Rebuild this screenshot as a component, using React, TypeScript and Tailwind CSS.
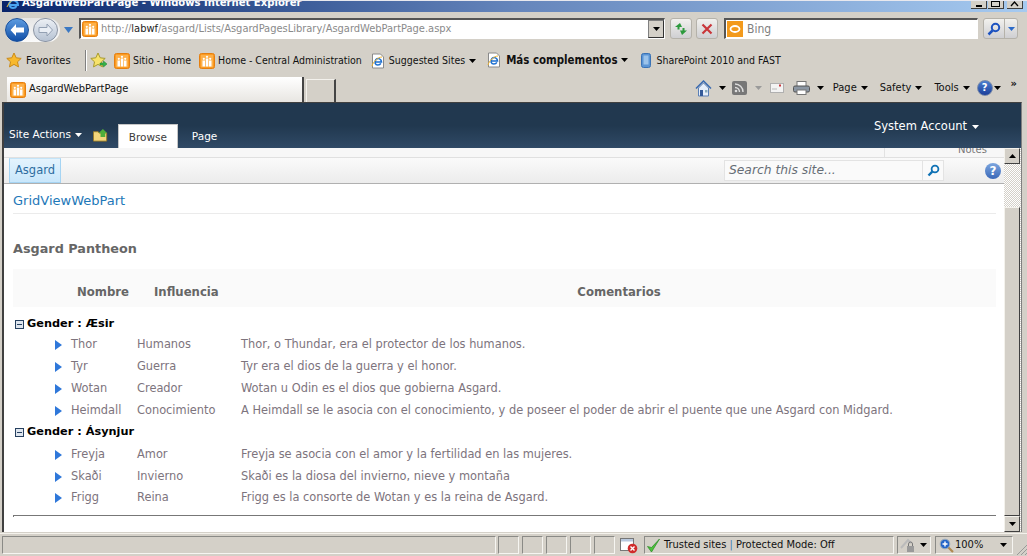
const ui = "font-['Tahoma','DejaVu_Sans_Condensed','Noto_Sans',sans-serif]";

function SpIcon({ size = 16 }: { size?: number }) {
  return (
    <svg width={size} height={size} viewBox="0 0 16 16" className="shrink-0">
      <rect x="0.5" y="0.5" width="15" height="15" rx="2" fill="#fb9a20" stroke="#e57f10" />
      <rect x="2" y="2" width="12" height="12" fill="#fdb04a" />
      <path d="M3.500 7.500h2.500v6H3.500zM6.800 5.500h2.500v8H6.800zM10 7.500h2.500v6H10z" fill="#fff" />
      <circle cx="4.800" cy="5.800" r="1.100" fill="#fff" />
      <circle cx="8" cy="3.800" r="1.100" fill="#fff" />
      <circle cx="11.200" cy="5.800" r="1.100" fill="#fff" />
    </svg>
  );
}

function IeIcon() {
  return (
    <svg width="16" height="16" viewBox="0 0 16 16" className="shrink-0">
      <path d="M2.500 1h8l3 3v11h-11z" fill="#fff" stroke="#8a8a8a" />
      <path d="M5 9h6.500c0-3-3.500-4.500-5.500-2.500-2 2.500-.8 5.500 1.800 5.500 1.500 0 2.500-.7 3-1.700" fill="none" stroke="#1c6fd0" strokeWidth="1.600" />
      <path d="M2 13c1-4 6-9 10-9" fill="none" stroke="#f3b52c" strokeWidth="1" />
    </svg>
  );
}

function Caret({ color = "#000", className = "" }: { color?: string; className?: string }) {
  return (
    <svg width="7" height="4" viewBox="0 0 7 4" className={`shrink-0 ${className}`}>
      <path d="M0 0h7L3.500 4z" fill={color} />
    </svg>
  );
}

function Star({ arrow = false }: { arrow?: boolean }) {
  return (
    <svg width="18" height="17" viewBox="0 0 18 17" className="shrink-0">
      <path d="M8 1l2.200 4.800 5 .6-3.700 3.400 1 5.100L8 12.400 3.500 14.900l1-5.100L.8 6.400l5-.6z" fill={arrow ? "#f7e26b" : "#f8b92e"} stroke={arrow ? "#a89a2c" : "#c98a1a"} />
      {arrow && <path d="M10 11h3.500V9l3.500 3-3.500 3v-2H10z" fill="#35b44a" stroke="#1c7c2d" strokeWidth=".5" />}
    </svg>
  );
}

function SmallBtn({ children, className = "" }: { children: React.ReactNode; className?: string }) {
  return (
    <div className={`h-[21px] flex items-center justify-center border border-[#b5b2aa] rounded-[3px] bg-gradient-to-b from-[#f2f1ee] to-[#cfcfd2] ${className}`}>
      {children}
    </div>
  );
}

function BookmarkLink({ icon, label, caret, className = "", bold = false }: { icon: React.ReactNode; label: string; caret?: boolean; className?: string; bold?: boolean }) {
  return (
    <div className={`flex items-center ${className}`}>
      {icon}
      <span className={`whitespace-nowrap ${bold ? "ml-[4px] font-bold text-[11.400px]" : "ml-[3px]"}`}>{label}</span>
      {caret && <Caret className={bold ? "ml-[3px]" : "ml-[4px]"} />}
    </div>
  );
}

function TitleBar() {
  return (
    <div className={`h-[12px] shrink-0 border-t border-[#e8e8ee] bg-gradient-to-r from-[#0a246a] from-[0%] via-[#6585bb] via-[50%] to-[#a6caf0] flex items-start overflow-hidden ml-[2px] ${ui}`}>
      <svg width="16" height="16" viewBox="0 0 16 16" className="ml-[4px] -mt-[5px] shrink-0">
        <path d="M3 9h9c0-4-5-6-7.500-3.500C2 8 3.500 12 7 12c1.500 0 3-.8 3.500-2" fill="none" stroke="#4aa3ee" strokeWidth="2" />
        <path d="M1 11C3 6 8 2 12 2" fill="none" stroke="#f3c030" strokeWidth="1" />
      </svg>
      <span className="-mt-[4px] text-[11.200px] leading-[12px] font-bold text-white whitespace-nowrap">AsgardWebPartPage - Windows Internet Explorer</span>
      <div className="ml-auto mr-[4px] flex gap-[1px] items-start">
        <div className="w-[16px] h-[8px] bg-[#d4d0c8] border-b border-r border-[#404040] flex justify-center"><div className="w-[6px] h-[2px] bg-black mt-[4px]" /></div>
        <div className="w-[16px] h-[8px] bg-[#d4d0c8] border-b border-r border-[#404040] flex justify-center"><div className="w-[9px] h-[6px] border border-black" /></div>
        <div className="w-[16px] h-[8px] bg-[#d4d0c8] ml-[2px] border-b border-r border-[#404040] flex justify-center">
          <svg width="9" height="6" viewBox="0 0 9 6"><path d="M1 5l3.500-4L8 5" fill="none" stroke="#000" strokeWidth="1.300" /></svg>
        </div>
      </div>
    </div>
  );
}

function AddressRow() {
  return (
    <div className={`h-[36px] shrink-0 flex items-start pt-[6px] text-[11px] ${ui}`}>
      <div className="ml-[5px] flex items-center h-[24px] w-[55px] rounded-full bg-gradient-to-b from-[#e6e6e6] to-[#fafafa]">
        <div className="w-[24px] h-[24px] rounded-full border border-[#1c4f96] bg-gradient-to-b from-[#5c9be0] to-[#0e4fa8] flex items-center justify-center">
          <svg width="16" height="14" viewBox="0 0 16 14"><path d="M7 1L1.500 7 7 13V9.500h8v-5H7z" fill="#fff" /></svg>
        </div>
        <div className="ml-[4px] w-[25px] h-[24px] rounded-full border border-[#8b94a3] bg-gradient-to-b from-[#ecf0f5] to-[#b6c2d3] flex items-center justify-center">
          <svg width="16" height="14" viewBox="0 0 16 14"><path d="M9 1l5.500 6L9 13V9.500H1v-5h8z" fill="#e9eef5" stroke="#93a0b3" /></svg>
        </div>
      </div>
      <svg width="9" height="6" viewBox="0 0 9 6" className="ml-[4px] mt-[9px] shrink-0"><path d="M0 0h9L4.500 6z" fill="#3b78c2" /></svg>
      <div className="ml-[6px] w-[586px] h-[21px] bg-white border-t-2 border-l-2 border-[#555] border-b border-r border-b-white border-r-white flex items-center">
        <div className="ml-[1px]"><SpIcon /></div>
        <span className="ml-[3px] text-[#8a8a8a] whitespace-nowrap">http://<span className="text-[#222]">labwf</span>/asgard/Lists/AsgardPagesLibrary/AsgardWebPartPage.aspx</span>
        <div className="ml-auto w-[16px] h-[18px] bg-[#d4d0c8] border border-[#808080] border-b-[#333] border-r-[#333] flex items-center justify-center">
          <Caret />
        </div>
      </div>
      <SmallBtn className="ml-[5px] w-[22px]">
        <svg width="14" height="14" viewBox="0 0 14 14"><path d="M6 1L1 5h2.500v2.500h2V5H8zM8 13l5-4.500h-2.500V6h-2v2.500H6z" fill="#2c9a3d" /></svg>
      </SmallBtn>
      <SmallBtn className="ml-[4px] w-[22px]">
        <svg width="12" height="12" viewBox="0 0 12 12"><path d="M1.500 1.500l9 9M10.500 1.500l-9 9" stroke="#c9363a" strokeWidth="2.200" /></svg>
      </SmallBtn>
      <div className="ml-[6px] w-[254px] h-[21px] bg-white border-t-2 border-l-2 border-[#555] border-b border-r border-b-white border-r-white flex items-center text-[12px]">
        <div className="w-[16px] h-[16px] bg-[#f39a1c] flex items-center justify-center ml-[1px]">
          <svg width="12" height="10" viewBox="0 0 12 10"><ellipse cx="6" cy="5" rx="4.500" ry="3" fill="none" stroke="#fff" strokeWidth="1.800" /></svg>
        </div>
        <span className="ml-[4px] text-[#808080]">Bing</span>
      </div>
      <SmallBtn className="ml-[5px] w-[35px] !justify-start">
        <div className="w-[21px] flex justify-center border-r border-[#b5b2aa] h-full items-center">
          <svg width="14" height="14" viewBox="0 0 14 14"><circle cx="8.500" cy="5.500" r="3.700" fill="none" stroke="#1c52c0" strokeWidth="2" /><path d="M5.500 8.500L1.500 12.500" stroke="#1c52c0" strokeWidth="2.500" /></svg>
        </div>
        <div className="flex-1 flex justify-center"><Caret color="#2c6ac8" /></div>
      </SmallBtn>
    </div>
  );
}

function FavoritesRow() {
  return (
    <div className={`h-[28px] shrink-0 flex items-center text-[10.500px] text-[#111] pb-[3px] ${ui}`}>
      <div className="ml-[6px] flex items-center"><Star /><span className="ml-[2px] pt-[1px] w-[46px] whitespace-nowrap text-[11px]">Favorites</span></div>
      <div className="ml-[13px] w-[2px] h-[21px] border-l border-r border-l-[#808080] border-r-white" />
      <div className="ml-[3px]"><Star arrow /></div>
      <BookmarkLink className="ml-[6px]" icon={<SpIcon />} label="Sitio - Home" />
      <BookmarkLink className="ml-[8px]" icon={<SpIcon />} label="Home - Central Administration" />
      <BookmarkLink className="ml-[8px]" icon={<IeIcon />} label="Suggested Sites" caret />
      <BookmarkLink className="ml-[10px]" icon={<IeIcon />} label="Más complementos" caret bold />
      <div className="ml-[13px] flex items-center">
        <svg width="10" height="15" viewBox="0 0 10 15"><rect x=".5" y=".5" width="9" height="14" rx="2" fill="#5b94d4" stroke="#3a72b5" /><rect x="2.500" y="2.500" width="5" height="9" fill="#9cc3ea" /></svg>
        <span className="ml-[6px] whitespace-nowrap">SharePoint 2010 and FAST</span>
      </div>
    </div>
  );
}

function TabRow() {
  return (
    <div className={`h-[26px] shrink-0 flex items-start text-[11px] text-[#111] ${ui}`}>
      <div className="ml-[7px] mt-[1px] w-[297px] h-[25px] flex items-center bg-gradient-to-b from-white to-[#e8e6e2] border-r-2 border-[#444]">
        <div className="ml-[3px]"><SpIcon /></div>
        <span className="ml-[3px]">AsgardWebPartPage</span>
      </div>
      <div className="ml-[2px] mt-[3px] w-[30px] h-[23px] border-t border-l border-[#f3f1ec] border-r-2 border-r-[#444]" />
      <div className="ml-auto flex items-center mr-[10px] h-[22px] mt-[1px]">
        <svg width="17" height="17" viewBox="0 0 17 17"><path d="M1 8.500L8.500 1l7.500 7.500" fill="none" stroke="#3a6ab0" strokeWidth="1.500" /><path d="M3.500 8v8h10V8L8.500 3z" fill="#e6eefa" stroke="#5a7fb5" /><rect x="5" y="10" width="3" height="6" fill="#345a99" /><rect x="10" y="10" width="2.500" height="2.500" fill="#8ab" /></svg>
        <Caret className="ml-[7px]" />
        <div className="ml-[6px] w-[15px] h-[14px] rounded-[2px] bg-[#777] flex items-center justify-center">
          <svg width="10" height="10" viewBox="0 0 10 10"><circle cx="2" cy="8" r="1.300" fill="#ddd" /><path d="M1 4.500a4.500 4.500 0 0 1 4.500 4.500M1 1a8 8 0 0 1 8 8" fill="none" stroke="#ddd" strokeWidth="1.400" /></svg>
        </div>
        <Caret color="#9a9a9a" className="ml-[8px]" />
        <svg width="14" height="10" viewBox="0 0 14 10" className="ml-[8px]"><rect x=".5" y=".5" width="13" height="9" fill="#f3f3f3" stroke="#b0b0b0" /><rect x="9" y="1.500" width="2" height="2" fill="#c9363a" /><path d="M2 6h5" stroke="#bbb" /></svg>
        <svg width="17" height="14" viewBox="0 0 17 14" className="ml-[9px]"><rect x="4" y=".5" width="9" height="5" fill="#fff" stroke="#777" /><rect x=".5" y="5" width="16" height="6" rx="1.500" fill="#8b96a3" stroke="#555" /><rect x="4" y="9" width="9" height="4.500" fill="#fff" stroke="#777" /></svg>
        <Caret className="ml-[7px]" />
        <span className="ml-[9px]">Page</span><Caret className="ml-[4px]" />
        <span className="ml-[12px]">Safety</span><Caret className="ml-[4px]" />
        <span className="ml-[12px]">Tools</span><Caret className="ml-[4px]" />
        <div className="ml-[7px] w-[16px] h-[16px] rounded-full bg-gradient-to-b from-[#4c7fd0] to-[#1d3f9a] border border-[#7a8aa8] text-white text-[11px] font-bold leading-[14px] text-center">?</div>
        <Caret className="ml-[1px]" />
        <span className="ml-[10px] -mt-[9px] text-[11px] leading-none font-bold">»</span>
      </div>
    </div>
  );
}

function Ribbon() {
  return (
    <div className="h-[45px] shrink-0 bg-gradient-to-b from-[#21384f] from-[50%] to-[#304a66] flex items-end text-white text-[10.500px] font-['DejaVu_Sans',sans-serif]">
      <div className="flex items-center h-[24px] ml-[5px] pb-[2px]">
        <span className="whitespace-nowrap">Site Actions</span>
        <Caret color="#fff" className="ml-[4px]" />
      </div>
      <svg width="16" height="14" viewBox="0 0 17 14" className="ml-[11px] mb-[6px] shrink-0"><path d="M.5 3.500h5l1 1.500h8v8.500H.5z" fill="#f3d67c" stroke="#9a7c2a" /><path d="M8 9V5h-2l4.500-4.500L15 5h-2v4z" fill="#4fae3b" /></svg>
      <div className="ml-[9px] w-[60px] h-[24px] pt-[2px] bg-white border border-b-0 border-[#c6c6c6] text-[#3b3b3b] flex items-center justify-center">Browse</div>
      <div className="ml-[14px] h-[24px] pt-[2px] flex items-center">Page</div>
      <div className="ml-auto mr-[42px] self-start mt-[15px] flex items-center">
        <span className="text-[11.500px] whitespace-nowrap">System Account</span>
        <Caret color="#fff" className="ml-[5px]" />
      </div>
    </div>
  );
}

function NavRows() {
  return (
    <div className="shrink-0 font-['DejaVu_Sans',sans-serif]">
      <div className="h-[9px] bg-[#f7f7f7] flex justify-end overflow-hidden">
        <div className="w-[120px] border-l border-[#e2e2e2] relative">
          <span className="absolute left-[73px] -top-[4px] text-[10px] leading-[12px] text-[#777]">Notes</span>
        </div>
      </div>
      <div className="h-[27px] border-t border-b border-t-[#e0e0e0] border-b-[#b0b0b0] bg-gradient-to-b from-[#fafafa] to-[#ececec] flex items-stretch">
        <div className="ml-[5px] w-[52px] bg-gradient-to-b from-[#e4f3fd] to-[#c9e7fb] border border-[#a5d4f3] border-t-[#c4e4f8] text-[#2e6da0] text-[11.500px] flex items-center justify-center">Asgard</div>
        <div className="ml-auto mr-[3px] my-auto flex items-center">
          <div className="w-[220px] h-[21px] bg-[#fafafa] border border-[#e3e3e3] flex items-stretch">
            <span className="flex-1 pl-[4px] italic text-[12.300px] leading-[19px] text-[#666d75]">Search this site...</span>
            <div className="w-[21px] border-l border-[#e3e3e3] flex items-center justify-center">
              <svg width="13" height="13" viewBox="0 0 13 13"><circle cx="8" cy="5" r="3.400" fill="none" stroke="#0f72b5" strokeWidth="1.800" /><path d="M5.300 7.700L1.500 11.500" stroke="#0f72b5" strokeWidth="2.400" /></svg>
            </div>
          </div>
          <div className="ml-[41px] w-[16px] h-[16px] rounded-full bg-gradient-to-b from-[#7da6de] to-[#3a68b8] text-white text-[12px] font-bold leading-[16px] text-center">?</div>
        </div>
      </div>
    </div>
  );
}

function Arrow() {
  return (
    <svg width="7" height="10" viewBox="0 0 7 10"><path d="M0 0l7 5-7 5z" fill="#2f78da" /></svg>
  );
}

const columns = "grid grid-cols-[42px_16px_66px_104px_1fr] items-center";

function Row({ a, b, c, h = "h-[22px]" }: { a: string; b: string; c: string; h?: string }) {
  return (
    <div className={`${columns} ${h} text-[11.400px] text-[#7d747d]`}>
      <div />
      <Arrow />
      <span>{a}</span>
      <span>{b}</span>
      <span className="whitespace-nowrap">{c}</span>
    </div>
  );
}

function Group({ label, className = "" }: { label: string; className?: string }) {
  return (
    <div className={`h-[22px] flex items-center text-[11.300px] font-bold text-black ${className}`}>
      <svg width="9" height="9" viewBox="0 0 9 9" className="ml-[2px] mr-[3px]"><rect x=".5" y=".5" width="8" height="8" fill="#dfe6ef" stroke="#26405f" /><path d="M2 4.500h5" stroke="#26405f" /></svg>
      <span>{label}</span>
    </div>
  );
}

function Content() {
  return (
    <div className="flex-1 min-h-0 min-w-0 bg-white overflow-hidden font-['DejaVu_Sans',sans-serif] pl-[9px] pr-[8px]">
      <div className="h-[30px] border-b border-[#ebebeb] text-[13px] text-[#1e78b8] flex items-center pt-[4px]">GridViewWebPart</div>
      <div className="h-[55px] pt-[26px] text-[12.800px] leading-[17px] font-bold text-[#666]">Asgard Pantheon</div>
      <div className="h-[38px] pt-[10px] bg-[#fafafa] text-[11.700px] font-bold text-[#666] grid grid-cols-[64px_77px_64px_1fr] items-center">
        <div />
        <span>Nombre</span>
        <span>Influencia</span>
        <span className="text-center pl-[24px]">Comentarios</span>
      </div>
      <div className="mt-[5px]">
        <Group label="Gender : Æsir" className="pt-[2px]" />
        <Row a="Thor" b="Humanos" c="Thor, o Thundar, era el protector de los humanos." />
        <Row a="Tyr" b="Guerra" c="Tyr era el dios de la guerra y el honor." />
        <Row a="Wotan" b="Creador" c="Wotan u Odin es el dios que gobierna Asgard." />
        <Row a="Heimdall" b="Conocimiento" c="A Heimdall se le asocia con el conocimiento, y de poseer el poder de abrir el puente que une Asgard con Midgard." />
        <Group label="Gender : Ásynjur" className="pb-[2px]" />
        <Row a="Freyja" b="Amor" c="Freyja se asocia con el amor y la fertilidad en las mujeres." />
        <Row a="Skaði" b="Invierno" c="Skaði es la diosa del invierno, nieve y montaña" h="h-[21px]" />
        <Row a="Frigg" b="Reina" c="Frigg es la consorte de Wotan y es la reina de Asgard." />
      </div>
      <div className="mt-[6px] h-[2px] border-t border-l border-[#777] border-b-0" />
    </div>
  );
}

function ScrollBar() {
  const btn = "w-[16px] h-[16px] bg-[#d4d0c8] border border-t-[#f4f2ec] border-l-[#f4f2ec] border-b-[#404040] border-r-[#404040] flex items-center justify-center shrink-0";
  return (
    <div className="w-[17px] shrink-0 flex flex-col bg-[repeating-conic-gradient(#d4d0c8_0_25%,#fff_0_50%)] bg-[length:2px_2px]">
      <div className={btn}><svg width="7" height="4" viewBox="0 0 7 4"><path d="M0 4h7L3.500 0z" fill="#000" /></svg></div>
      <div className="h-[43px] shrink-0" />
      <div className="flex-1 w-[16px] bg-[#d4d0c8] border border-t-[#f4f2ec] border-l-[#f4f2ec] border-b-[#404040] border-r-[#404040]" />
      <div className={btn}><Caret /></div>
    </div>
  );
}

function StatusBar() {
  const cell = "h-[18px] border border-t-[#8a8a86] border-l-[#8a8a86] border-b-[#f6f5f1] border-r-[#f6f5f1]";
  return (
    <div className={`h-[23px] mt-[1px] shrink-0 border-t border-[#f4f2ec] flex items-center text-[11px] text-[#111] ${ui}`}>
      <div className={`${cell} ml-[2px] w-[494px]`} />
      <div className={`${cell} ml-[2px] w-[21px]`} />
      <div className={`${cell} ml-[3px] w-[21px]`} />
      <div className={`${cell} ml-[3px] w-[21px]`} />
      <div className={`${cell} ml-[3px] w-[21px]`} />
      <div className={`${cell} ml-[3px] w-[21px]`} />
      <div className="ml-[5px] w-[18px] h-[18px] flex items-center justify-center">
        <svg width="18" height="17" viewBox="0 0 18 17"><rect x=".5" y="1.500" width="13" height="12" fill="#fff" stroke="#777" /><rect x="1" y="2" width="12" height="2.500" fill="#b8c8de" /><circle cx="12.500" cy="11.500" r="4.800" fill="#d02c2c" /><path d="M10.500 9.500l4 4M14.500 9.500l-4 4" stroke="#fff" strokeWidth="1.400" /></svg>
      </div>
      <div className={`${cell} ml-[6px] w-[250px] flex items-center`}>
        <svg width="15" height="15" viewBox="0 0 15 15" className="ml-[1px]"><path d="M1.500 8.500L5.500 14 13.500 1 5.500 9.500z" fill="#4cc23a" stroke="#2a8a24" strokeWidth=".7" /></svg>
        <span className="ml-[3px] whitespace-nowrap">Trusted sites <span className="text-[#3b7bb5]">|</span> Protected Mode: Off</span>
      </div>
      <div className={`${cell} ml-[3px] w-[34px] flex items-center`}>
        <svg width="15" height="15" viewBox="0 0 15 15" className="ml-[2px]"><path d="M1 10L8 2l3 3" fill="none" stroke="#bbb" strokeWidth="2" /><rect x="7" y="8" width="7" height="6" fill="#9a9a9a" /><path d="M8.500 8V6a2 2 0 0 1 4 0v2" fill="none" stroke="#777" /></svg>
        <Caret className="ml-[5px]" />
      </div>
      <div className={`${cell} ml-[4px] w-[78px] flex items-center`}>
        <svg width="15" height="15" viewBox="0 0 15 15" className="ml-[3px]"><path d="M9 9l5 5" stroke="#b08a50" strokeWidth="2.200" /><circle cx="6" cy="6" r="4.800" fill="#2566c8" stroke="#9ab" /><path d="M3.500 6h5M6 3.500v5" stroke="#fff" strokeWidth="1.400" /></svg>
        <span className="ml-[1px]">100%</span>
        <Caret className="ml-auto mr-[5px]" />
      </div>
      <svg width="11" height="11" viewBox="0 0 11 11" className="ml-[3px] mt-[8px] shrink-0"><path d="M1 11l10-10M5 11l6-6M9 11l2-2" stroke="#999" /></svg>
    </div>
  );
}

export default function App() {
  return (
    <div className="w-[1027px] h-[556px] bg-[#d4d0c8] flex flex-col overflow-hidden">
      <TitleBar />
      <AddressRow />
      <FavoritesRow />
      <TabRow />
      <div className="flex-1 min-h-0 ml-[2px] mr-[5px] border-l-2 border-t border-[#404040] border-r border-r-[#808080] flex flex-col">
        <Ribbon />
        <div className="flex-1 min-h-0 flex">
          <div className="flex-1 min-w-0 flex flex-col">
            <NavRows />
            <Content />
          </div>
          <ScrollBar />
        </div>
      </div>
      <StatusBar />
    </div>
  );
}
